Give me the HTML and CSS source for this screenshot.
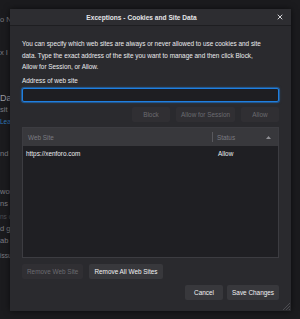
FILE: index.html
```html
<!DOCTYPE html>
<html lang="en">
<head>
    <meta charset="UTF-8">
    <meta name="viewport" content="width=device-width, initial-scale=1.0">
    <title>Exceptions - Cookies and Site Data</title>
    <link rel="stylesheet" href="styles.css">
</head>
<body>
    <div class="page">
        <div class="page-line top">o N</div>
        <div class="page-line gap">x I</div>
        <div class="page-heading">Da</div>
        <div class="page-line">sit</div>
        <div class="page-link">Lea</div>
        <div class="page-line gap">nd</div>
        <div class="page-line big-gap">wor</div>
        <div class="page-line">ns a</div>
        <div class="page-line faint">ns c</div>
        <div class="page-line">d ge</div>
        <div class="page-line">ab</div>
        <div class="page-line small">issu</div>
    </div>

    <div class="dialog">
        <div class="dialog-header">
            <div class="dialog-title">Exceptions - Cookies and Site Data</div>
            <button class="close-btn" title="Close">
                <svg width="6" height="6" viewBox="0 0 6 6"><path d="M1 1L5 5M5 1L1 5" stroke="#d4d4d8" stroke-width="1" stroke-linecap="round"/></svg>
            </button>
        </div>

        <div class="dialog-body">
            <p class="intro">You can specify which web sites are always or never allowed to use cookies and site data. Type the exact address of the site you want to manage and then click Block, Allow for Session, or Allow.</p>

            <label class="field-label" for="siteUrl">Address of web site</label>
            <input class="url-input" id="siteUrl" type="text">

            <div class="action-row">
                <button class="btn" disabled>Block</button>
                <button class="btn" disabled>Allow for Session</button>
                <button class="btn" disabled>Allow</button>
            </div>

            <div class="site-table">
                <div class="table-head">
                    <div class="head-cell">Web Site</div>
                    <div class="head-cell status">
                        <span>Status</span>
                        <svg class="sort-arrow" width="5" height="3" viewBox="0 0 5 3"><path d="M0 3L2.5 0L5 3Z" fill="#8f8f94"/></svg>
                    </div>
                </div>
                <div class="table-row">
                    <div class="row-cell">https://xenforo.com</div>
                    <div class="row-cell status">Allow</div>
                </div>
            </div>

            <div class="remove-row">
                <button class="btn" disabled>Remove Web Site</button>
                <button class="btn">Remove All Web Sites</button>
            </div>

            <div class="footer-row">
                <button class="btn">Cancel</button>
                <button class="btn">Save Changes</button>
            </div>
        </div>

        <svg class="resize-grip" width="8" height="8" viewBox="0 0 8 8">
            <path d="M8 1L1 8M8 4L4 8M8 7L7 8" stroke="#55555a" stroke-width="0.8"/>
        </svg>
    </div>
</body>
</html>
```

FILE: styles.css
```css
* {
    margin: 0;
    padding: 0;
    box-sizing: border-box;
}

body {
    font-family: 'Liberation Sans', Arial, sans-serif;
    font-size: 6.4px;
    background: #1b1b1e;
    color: #ececef;
    height: 100vh;
    overflow: hidden;
    position: relative;
}

/* page behind the dialog */
.page {
    color: #7c7c82;
    font-size: 7.5px;
    line-height: 12px;
    white-space: nowrap;
}

.page-line.top {
    margin-top: 14px;
}

.page-line.gap {
    margin-top: 21px;
}

.page-line.big-gap {
    margin-top: 26px;
}

.page-line.faint {
    color: #4d4d52;
    font-size: 6.5px;
    line-height: 13px;
}

.page-line.small {
    font-size: 6.5px;
    line-height: 18px;
}

.page-heading {
    margin-top: 33px;
    font-size: 9px;
    line-height: 12px;
    color: #9a9aa0;
}

.page-link {
    color: #2f78b8;
    font-size: 6.5px;
    line-height: 11px;
}

/* dialog */
.dialog {
    position: absolute;
    left: 10px;
    top: 9px;
    width: 281px;
    height: 302px;
    background: #2a2a2e;
    box-shadow: 0 0 6px rgba(0, 0, 0, 0.6);
}

.dialog-header {
    height: 17px;
    display: flex;
    align-items: center;
    background: #2d2d31;
    border-bottom: 1px solid #1e1e21;
}

.dialog-title {
    flex: 1;
    text-align: center;
    font-weight: bold;
    font-size: 6.6px;
    color: #e4e4e7;
}

.close-btn {
    width: 14px;
    height: 14px;
    margin-right: 4px;
    background: none;
    border: none;
    display: flex;
    align-items: center;
    justify-content: center;
}

.dialog-body {
    padding: 0 12px;
}

.intro {
    margin-top: 12px;
    max-width: 244px;
    line-height: 11.7px;
}

.field-label {
    display: block;
    margin-top: 2px;
    line-height: 12px;
}

.url-input {
    display: block;
    width: 100%;
    height: 14px;
    margin-top: 1px;
    background: #1e1e22;
    border: 1px solid #1f7fe0;
    border-radius: 2px;
    box-shadow: 0 0 0 1px rgba(31, 127, 224, 0.45), 0 0 3px rgba(31, 127, 224, 0.5);
    outline: none;
}

.btn {
    height: 15px;
    min-width: 38px;
    padding: 0 5px;
    font-family: inherit;
    font-size: 6.4px;
    background: #38383c;
    color: #f2f2f4;
    border: none;
    border-radius: 2px;
}

.btn:disabled {
    background: #302f33;
    color: #6b6b70;
}

.action-row {
    display: flex;
    justify-content: flex-end;
    gap: 6px;
    margin-top: 5px;
}

.site-table {
    margin-top: 5px;
    height: 131px;
    background: #1f1f23;
    border: 1px solid #3c3c41;
}

.table-head {
    display: grid;
    grid-template-columns: 189px 1fr;
    height: 18px;
    background: #38383c;
    align-items: center;
}

.head-cell {
    padding-left: 5px;
    color: #7a7a80;
}

.head-cell.status {
    display: flex;
    align-items: center;
    justify-content: space-between;
    padding: 0 7px 0 4px;
    height: 10px;
    border-left: 1px solid #58585d;
}

.table-row {
    display: grid;
    grid-template-columns: 189px 1fr;
    height: 15px;
    align-items: center;
}

.row-cell {
    padding-left: 3px;
    color: #ededf0;
}

.row-cell.status {
    padding-left: 6px;
}

.remove-row {
    display: flex;
    gap: 6px;
    margin-top: 6px;
}

.footer-row {
    display: flex;
    justify-content: flex-end;
    gap: 4px;
    margin-top: 6px;
}

.resize-grip {
    position: absolute;
    right: 1px;
    bottom: 1px;
}
```
